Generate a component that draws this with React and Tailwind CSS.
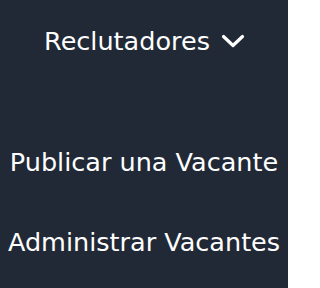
export default function App() {
  return (
    <div
      className="w-[288px] h-[288px] bg-[#212936] text-white flex flex-col items-center pt-[25px]"
      style={{ fontFamily: '"DejaVu Sans", sans-serif' }}
    >
      {/* dropdown trigger */}
      <div className="flex flex-row items-center gap-[11px] h-8 text-[25.5px] pl-[1px]">
        <span>Reclutadores</span>
        <svg width="24" height="14" viewBox="0 0 24 14" fill="none">
          <polyline
            points="2.5,2.5 12,11.5 21.5,2.5"
            stroke="white"
            strokeWidth="3.2"
            strokeLinecap="round"
            strokeLinejoin="round"
          />
        </svg>
      </div>

      {/* menu items */}
      <div className="flex flex-col items-center gap-12 mt-[89px] text-[25.5px]">
        <a className="h-8 leading-8">Publicar una Vacante</a>
        <a className="h-8 leading-8">Administrar Vacantes</a>
      </div>
    </div>
  );
}
